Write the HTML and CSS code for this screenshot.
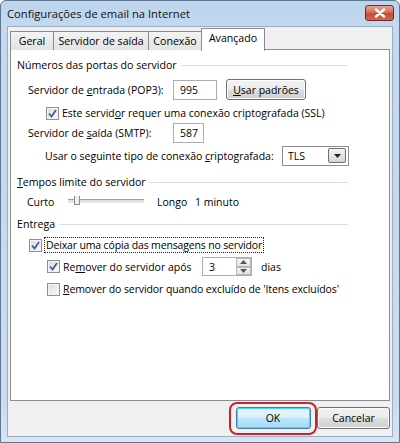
FILE: index.html
```html
<!DOCTYPE html>
<html>
<head>
<meta charset="utf-8">
<link rel="stylesheet" href="styles.css">
</head>
<body>
<div class="window">
  <div class="titlebar">
    <span class="title">Configurações de email na Internet</span>
    <span class="close"><svg width="14" height="10" viewBox="0 0 14 10"><path d="M3 1.5 L11 8.5 M11 1.5 L3 8.5" stroke="#fff" stroke-width="2.4" stroke-linecap="round"/></svg></span>
  </div>
  <div class="client">
    <div class="tabs">
      <div class="tab t1">Geral</div>
      <div class="tab t2">Servidor de saída</div>
      <div class="tab t3">Conexão</div>
      <div class="tab sel">Avançado</div>
    </div>
    <div class="panel">
      <div class="gtitle g1"><span>Números das portas do servidor</span><i class="line"></i></div>
      <div class="row r1">
        <span class="lbl">Servidor de <u>e</u>ntrada (POP3):</span>
        <span class="input w43">995</span>
        <span class="btn usar"><u>U</u>sar padrões</span>
      </div>
      <div class="row r2">
        <span class="cb on"><svg width="9" height="9" viewBox="0 0 9 9"><path d="M1 4.5 L3.5 7.5 L8 1" fill="none" stroke="#3f5f9c" stroke-width="1.8"/></svg></span>
        <span class="cbl">Este servid<u>o</u>r requer uma conexão criptografada (SSL)</span>
      </div>
      <div class="row r3">
        <span class="lbl">Servidor de <u>s</u>aída (SMTP):</span>
        <span class="input w30">587</span>
      </div>
      <div class="row r4">
        <span class="lbl2">Usar o seguinte tipo de conexão <u>c</u>riptografada:</span>
        <span class="select"><span class="sv">TLS</span><span class="drop"><svg width="7" height="4" viewBox="0 0 7 4"><path d="M0 0 H7 L3.5 4 Z" fill="#222"/></svg></span></span>
      </div>
      <div class="gtitle g2"><span><u>T</u>empos limite do servidor</span><i class="line"></i></div>
      <div class="row r5">
        <span class="curto">Curto</span>
        <span class="slider"><span class="track"></span><span class="thumb"></span></span>
        <span class="longo">Longo</span>
        <span class="min">1 minuto</span>
      </div>
      <div class="gtitle g3"><span>Entrega</span><i class="line"></i></div>
      <div class="row r6">
        <span class="cb on"><svg width="9" height="9" viewBox="0 0 9 9"><path d="M1 4.5 L3.5 7.5 L8 1" fill="none" stroke="#3f5f9c" stroke-width="1.8"/></svg></span>
        <span class="cbl focus">Deixar uma cópia das mensagens no servidor</span>
      </div>
      <div class="row r7">
        <span class="cb on"><svg width="9" height="9" viewBox="0 0 9 9"><path d="M1 4.5 L3.5 7.5 L8 1" fill="none" stroke="#3f5f9c" stroke-width="1.8"/></svg></span>
        <span class="cbl apos">Re<u>m</u>over do servidor após</span>
        <span class="spin"><span class="sv">3</span><span class="arrows"><span class="ar"><svg width="7" height="4" viewBox="0 0 7 4"><path d="M0 4 H7 L3.5 0 Z" fill="#555"/></svg></span><span class="ar"><svg width="7" height="4" viewBox="0 0 7 4"><path d="M0 0 H7 L3.5 4 Z" fill="#555"/></svg></span></span></span>
        <span class="dias">dias</span>
      </div>
      <div class="row r8">
        <span class="cb"></span>
        <span class="cbl"><u>R</u>emover do servidor quando excluído de 'Itens excluídos'</span>
      </div>
    </div>
    <div class="buttons">
      <span class="okwrap"><span class="btn ok">OK</span></span>
      <span class="btn cancel">Cancelar</span>
    </div>
  </div>
</div>
</body>
</html>
```
FILE: styles.css
```css
html, body { margin: 0; padding: 0; }
body { width: 400px; height: 443px; overflow: hidden; font-family: "Open Sans", "Noto Sans", sans-serif; font-size: 10.5px; color: #000; white-space: nowrap; }
u { text-decoration: underline; text-underline-offset: 1px; }
.window {
  box-sizing: border-box; width: 400px; height: 443px;
  background: linear-gradient(#bcd4ec 0px, #c3d9ef 27px, #c9dcef 400px, #d6e6f4 443px);
  border: 1px solid #5f7590; border-radius: 6px 6px 0 0;
  display: flex; flex-direction: column;
}
.titlebar { height: 25px; display: flex; align-items: center; padding-left: 6px; position: relative; }
.title { font-size: 11.2px; color: #111; }
.close {
  position: absolute; right: 5px; top: 4px; width: 27px; height: 14px;
  border: 1px solid #6d2b22; border-radius: 3px;
  background: linear-gradient(#e8a493 0%, #d36e57 45%, #c24b33 55%, #d26a4e 100%);
  display: flex; align-items: center; justify-content: center;
}
.client {
  margin: 0 6px 0 6px; height: 411px; box-sizing: border-box;
  background: #f0f0f0; border: 1px solid #98adc6;
  padding: 1px 3px 0 2px;
}
.tabs { display: flex; align-items: flex-end; height: 22px; position: relative; z-index: 1; }
.tab {
  box-sizing: border-box; height: 19px; border: 1px solid #898c95; border-bottom: none;
  background: linear-gradient(#f3f3f3, #e3e3e3); display: flex; align-items: center; justify-content: center;
  margin-right: -1px; font-size: 10.6px;
}
.t1 { width: 44px; }
.t2 { width: 96px; }
.t3 { width: 54px; }
.tab.sel { width: 64px; background: #fff; align-items: flex-start; padding-top: 2px; margin-bottom: -1px; height: 23px; }
.panel {
  box-sizing: border-box; width: 380px; height: 352px; margin-top: -1px;
  border: 1px solid #898c95; background: #fff; padding: 0 0 0 6px;
}
.gtitle { display: flex; align-items: center; height: 14px; font-size: 10.6px; }
.gtitle .line { flex: 1; height: 0; border-top: 1px solid #d5dfe5; margin: 1px 41px 0 4px; }
.g1 { margin-top: 8px; }
.g2 { margin-top: 10px; }
.g3 { margin-top: 8px; }
.row { display: flex; align-items: center; }
.r1 { height: 21px; margin-top: 7px; padding-left: 11px; }
.lbl { width: 145px; }
.input {
  box-sizing: border-box; height: 20px; border: 1px solid #abadb3;
  background: #fff; padding-left: 6px; display: flex; align-items: center;
}
.w43 { width: 44px; }
.w30 { width: 31px; }
.btn {
  box-sizing: border-box; display: flex; align-items: center; justify-content: center;
  border: 1px solid #707070; border-radius: 3px;
  background: linear-gradient(#f2f2f2 0%, #ebebeb 49%, #dddddd 51%, #cfcfcf 100%);
  box-shadow: inset 0 0 0 1px #fcfcfc;
}
.usar { width: 80px; height: 21px; margin-left: 9px; }
.r2 { height: 12px; margin-top: 7px; padding-left: 29px; }
.cb {
  box-sizing: border-box; width: 13px; height: 13px; border: 1px solid #8f8f8f; background: linear-gradient(135deg, #dcdcdc, #fbfbfb);
  box-shadow: inset 0 0 0 1px #f4f4f4; display: flex; align-items: center; justify-content: center; flex: none;
}
.cbl { margin-left: 3px; }
.r3 { height: 19px; margin-top: 4px; padding-left: 11px; }
.r4 { height: 19px; margin-top: 4px; padding-left: 28px; }
.lbl2 { width: 237px; }
.select {
  box-sizing: border-box; width: 67px; height: 20px; border: 1px solid #8e8f8f; background: #fff;
  display: flex; align-items: center; justify-content: space-between; padding-left: 5px; padding-right: 2px;
}
.drop {
  box-sizing: border-box; width: 18px; height: 15px; border: 1px solid #707070; border-radius: 2px;
  background: linear-gradient(#f2f2f2, #d6d6d6); display: flex; align-items: center; justify-content: center;
}
.r5 { height: 14px; margin-top: 6px; padding-left: 10px; }
.curto { width: 41px; }
.slider { width: 76px; height: 12px; position: relative; display: block; }
.track { position: absolute; left: 0; right: 0; top: 3px; height: 2px; border-top: 1px solid #a0a0a0; border-bottom: 1px solid #e8e8e8; background: #e0e0e0; }
.thumb { position: absolute; left: 6px; top: 0; width: 4px; height: 8px; border: 1px solid #8a8a8a; border-top: none; background: #f0f0f0; }
.longo { margin-left: 13px; width: 38px; }
.r6 { height: 14px; margin-top: 7px; padding-left: 12px; }
.focus { outline: 1px dotted #222; outline-offset: 0px; padding: 0 1px; line-height: 14px; letter-spacing: -0.15px; }
.r7 { height: 19px; margin-top: 5px; padding-left: 30px; }
.apos { width: 139px; }
.spin {
  box-sizing: border-box; width: 50px; height: 19px; border: 1px solid #abadb3; background: #fff;
  display: flex; align-items: center; justify-content: space-between; padding-left: 6px;
}
.arrows { display: flex; flex-direction: column; width: 15px; height: 17px; }
.ar { flex: 1; box-sizing: border-box; border: 1px solid #b8b8b8; background: linear-gradient(#f4f4f4, #e2e2e2); display: flex; align-items: center; justify-content: center; }
.dias { margin-left: 9px; }
.r8 { height: 12px; margin-top: 7px; padding-left: 30px; }
.r8 .cbl { letter-spacing: -0.1px; }
.buttons { display: flex; justify-content: flex-end; align-items: center; height: 34px; margin-top: 0; width: 380px; }
.okwrap {
  box-sizing: border-box; width: 88px; height: 33px; border: 2px solid #c8232b; border-radius: 8px;
  display: flex; align-items: center; justify-content: center; margin-right: -1px;
}
.ok { width: 75px; height: 22px; border-color: #3c7fb1; background: linear-gradient(#eaf6fd 0%, #d9f0fc 49%, #bee6fd 51%, #a7d9f5 100%); box-shadow: inset 0 0 0 1px #48d5f8; }
.cancel { width: 73px; height: 22px; margin-left: 1px; }
```
